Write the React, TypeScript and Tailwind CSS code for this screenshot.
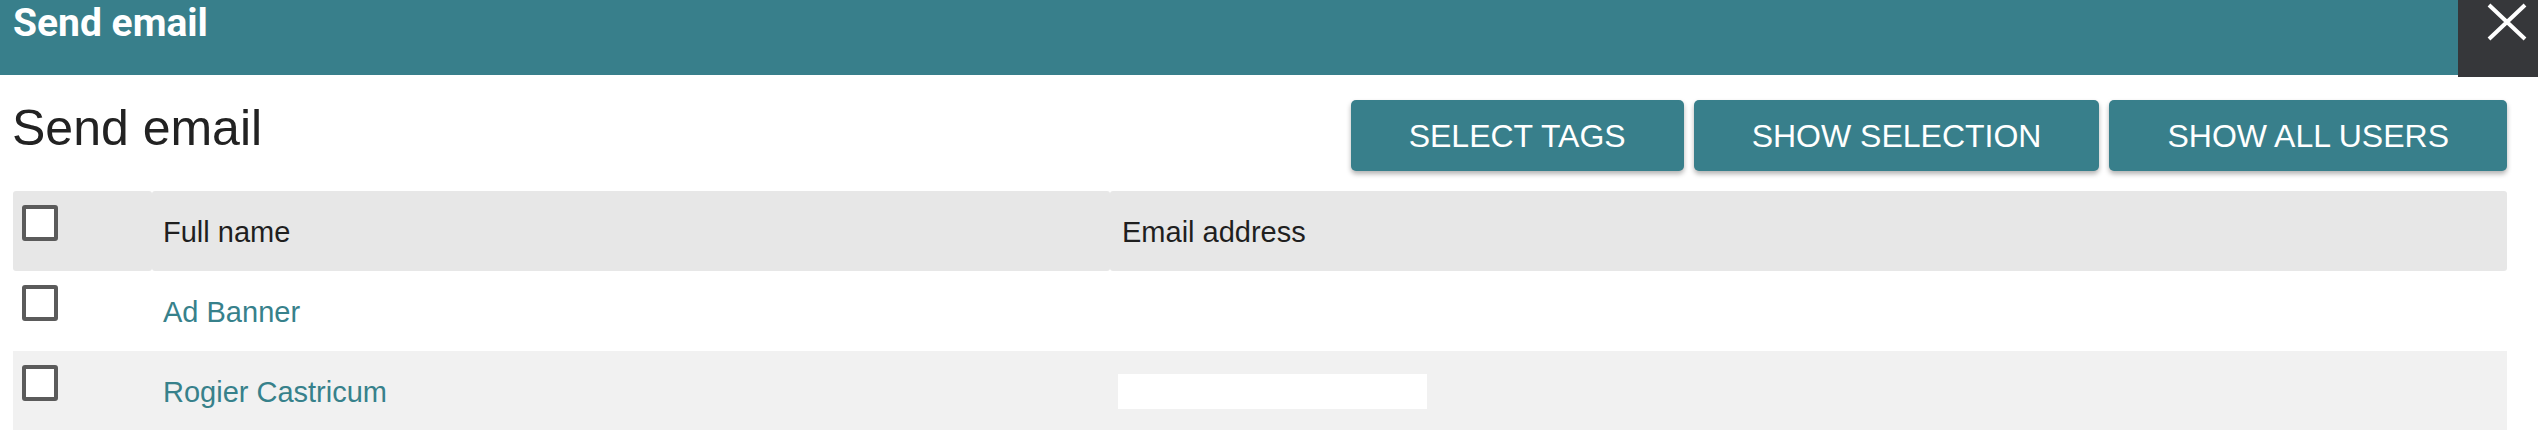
import React from "react";

type User = { name: string; email: string | null };

const users: User[] = [
  { name: "Ad Banner", email: null },
  { name: "Rogier Castricum", email: "" },
];

const Checkbox: React.FC = () => (
  <span className="block w-[36px] h-[36px] border-[4px] border-[#5b5b5b] rounded-[3px] bg-white" />
);

const CloseIcon: React.FC = () => (
  <svg width="40" height="38" viewBox="0 0 40 38">
    <path d="M2 2 L38 36 M38 2 L2 36" stroke="#ffffff" strokeWidth="4" />
  </svg>
);

export default function App() {
  const buttons = ["SELECT TAGS", "SHOW SELECTION", "SHOW ALL USERS"];

  return (
    <div className="w-[2538px] h-[430px] overflow-hidden bg-white font-['Liberation_Sans',Arial,sans-serif]">
      <div className="flex h-[75px] bg-[#387f8b]">
        <h1 className="flex-1 pl-[13px] font-['Roboto',sans-serif] font-bold text-[39px] leading-[46px] text-white">
          Send email
        </h1>
        <button className="w-[80px] h-[77px] bg-[#36373a] flex items-start pl-[29px] pt-[3px]">
          <CloseIcon />
        </button>
      </div>

      <div className="pl-[13px] pr-[31px]">
        <div className="flex justify-between items-start pt-[23px]">
          <h2 className="text-[50px] leading-[60px] text-[#222222] -ml-[1px]">Send email</h2>
          <div className="flex gap-[10px] pt-[2px]">
            {buttons.map((b) => (
              <button
                key={b}
                className="h-[71px] px-[58px] rounded-[5px] bg-[#387f8b] text-white text-[32px] shadow-[0_3px_5px_rgba(0,0,0,0.3)]"
              >
                {b}
              </button>
            ))}
          </div>
        </div>

        <div className="mt-[20px] grid grid-cols-[139px_958px_1fr] text-[29px]">
          <div className="h-[80px] bg-[#e7e7e7] rounded-[3px] pl-[9px] pt-[14px]">
            <Checkbox />
          </div>
          <div className="h-[80px] bg-[#e7e7e7] rounded-[3px] pl-[11px] flex items-center pt-[3px] text-[#1f1f1f]">
            Full name
          </div>
          <div className="h-[80px] bg-[#e7e7e7] rounded-[3px] pl-[12px] flex items-center pt-[3px] text-[#1f1f1f]">
            Email address
          </div>

          {users.map((u, i) => {
            const bg = i % 2 === 1 ? "bg-[#f1f1f1]" : "bg-white";
            return (
              <React.Fragment key={u.name}>
                <div className={`h-[80px] ${bg} pl-[9px] pt-[14px]`}>
                  <Checkbox />
                </div>
                <div className={`h-[80px] ${bg} pl-[11px] flex items-center pt-[3px] text-[#37818b]`}>
                  {u.name}
                </div>
                <div className={`h-[80px] ${bg} pl-[8px] flex items-center`}>
                  {u.email !== null && <span className="block w-[309px] h-[35px] bg-white" />}
                </div>
              </React.Fragment>
            );
          })}
        </div>
      </div>
    </div>
  );
}
